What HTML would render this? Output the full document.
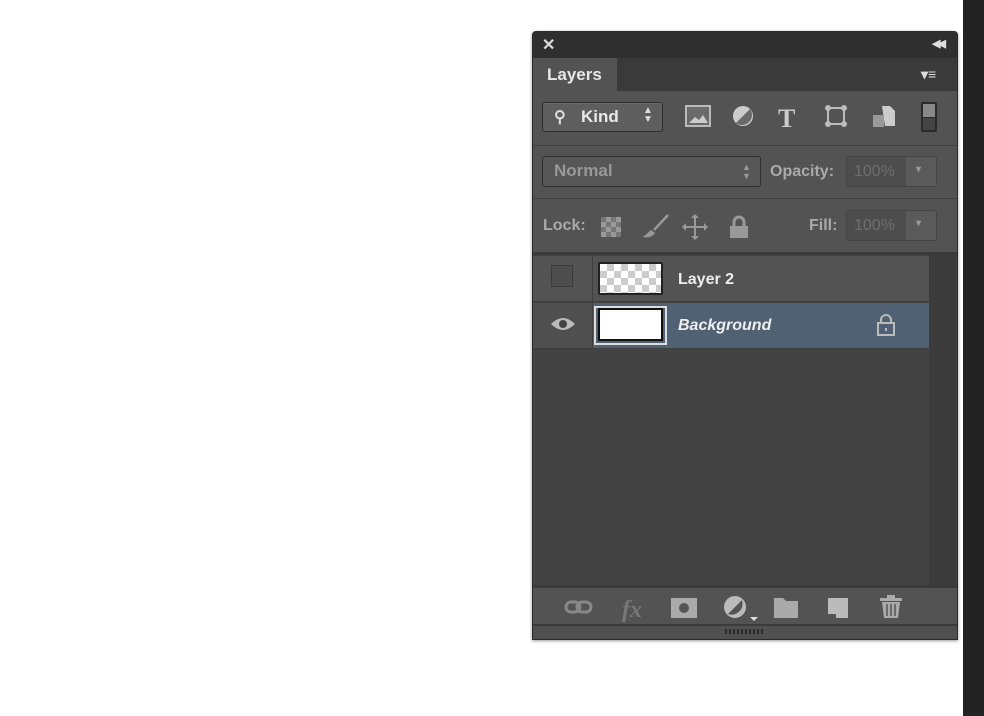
<!DOCTYPE html>
<html><head><meta charset="utf-8"><style>
*{margin:0;padding:0;box-sizing:border-box}
body{width:984px;height:716px;background:#fff;position:relative;overflow:hidden;font-family:"Liberation Sans",sans-serif;font-weight:bold}
.a{position:absolute}
.box{position:absolute;border:1px solid #2e2e2e;border-radius:3px}
.t{position:absolute;color:#c8c8c8;font-size:16px}
.dim{color:#8a8a8a}
</style></head><body>
<div class="a" style="left:963px;top:0;width:21px;height:716px;background:#232323"></div>
<div class="a" style="left:532px;top:31px;width:426px;height:609px;background:#535353;border:1px solid #2a2a2a;border-radius:4px 4px 0 0;box-shadow:0 1px 3px rgba(0,0,0,.4)"></div>
<div class="a" style="left:533px;top:32px;width:424px;height:26px;background:#2f2f2f;border-radius:3px 3px 0 0"></div>
<div class="t" style="left:542px;top:35px;color:#ddd;font-size:16px">✕</div>
<div class="t" style="left:932px;top:37px;color:#ddd;font-size:11px;letter-spacing:-3px">◀◀</div>
<div class="a" style="left:533px;top:58px;width:424px;height:33px;background:#3a3a3a"></div>
<div class="a" style="left:533px;top:58px;width:84px;height:34px;background:#535353"></div>
<div class="t" style="left:547px;top:65px;color:#e8e8e8;font-size:17px">Layers</div>
<div class="t" style="left:921px;top:66px;color:#ddd;font-size:14px">▾≡</div>
<div class="box" style="left:542px;top:102px;width:121px;height:30px;background:#5e5e5e;box-shadow:inset 0 1px 0 #6a6a6a"></div>
<div class="t" style="left:554px;top:107px;color:#ddd">⚲</div>
<div class="t" style="left:581px;top:107px;color:#e8e8e8;font-size:17px">Kind</div>
<div class="t" style="left:643px;top:106px;color:#ddd;font-size:10px;line-height:9px">▲<br>▼</div>
<svg class="a" style="left:680px;top:100px" width="270" height="36">
<rect x="6" y="6" width="24" height="20" fill="#6a6a6a" stroke="#bbb" stroke-width="2"/><path d="M9 23l6-6 4 3 4-5 5 8z" fill="#ccc"/>
<circle cx="63" cy="16" r="10" fill="#ccc"/><path d="M56 23L70 9A10 10 0 0 1 56 23z" fill="#6a6a6a"/>
<text x="98" y="27" font-family="Liberation Serif" font-size="26" fill="#ccc">T</text>
<rect x="148" y="8" width="16" height="16" fill="none" stroke="#bbb" stroke-width="2"/><g fill="#bbb"><circle cx="148" cy="8" r="3"/><circle cx="164" cy="8" r="3"/><circle cx="148" cy="24" r="3"/><circle cx="164" cy="24" r="3"/></g>
<path d="M202 6h8l5 5v15h-10z" fill="#ccc"/><rect x="193" y="15" width="11" height="12" fill="#999"/>
<rect x="241" y="2" width="16" height="30" fill="#2a2a2a" rx="2"/><rect x="243" y="4" width="12" height="13" fill="#888"/><rect x="243" y="18" width="12" height="12" fill="#444"/>
</svg>
<div class="a" style="left:533px;top:145px;width:424px;height:1px;background:#404040"></div>
<div class="box" style="left:542px;top:156px;width:219px;height:31px;background:#575757"></div>
<div class="t dim" style="left:554px;top:161px;font-size:17px;color:#999">Normal</div>
<div class="t" style="left:742px;top:163px;color:#999;font-size:9px;line-height:9px">▲<br>▼</div>
<div class="t" style="left:770px;top:163px;color:#aaa">Opacity:</div>
<div class="box" style="left:846px;top:156px;width:91px;height:31px;background:#4d4d4d;border-color:#444"></div>
<div class="a" style="left:906px;top:157px;width:30px;height:29px;background:#5a5a5a"></div>
<div class="t" style="left:854px;top:163px;color:#6e6e6e;font-weight:normal">100%</div>
<div class="t" style="left:916px;top:164px;color:#999;font-size:10px">▾</div>
<div class="a" style="left:533px;top:198px;width:424px;height:1px;background:#404040"></div>
<div class="t" style="left:543px;top:217px;color:#aaa">Lock:</div>
<svg class="a" style="left:598px;top:210px" width="160" height="34">
<g fill="#999"><rect x="3" y="7" width="20" height="20"/></g><g fill="#777"><rect x="3" y="7" width="5" height="5"/><rect x="13" y="7" width="5" height="5"/><rect x="8" y="12" width="5" height="5"/><rect x="18" y="12" width="5" height="5"/><rect x="3" y="17" width="5" height="5"/><rect x="13" y="17" width="5" height="5"/><rect x="8" y="22" width="5" height="5"/><rect x="18" y="22" width="5" height="5"/></g>
<path d="M70 5L56 20" stroke="#999" stroke-width="2.5"/><path d="M44 27c4-1 6-5 9-7l4 3c-3 4-7 5-13 4z" fill="#999"/>
<path d="M97 6v22M86 17h22" stroke="#999" stroke-width="2"/><path d="M97 4l-4 4h8zM97 30l-4-4h8zM84 17l4-4v8zM110 17l-4-4v8z" fill="#999"/>
<path d="M136 16v-4a5 5 0 0 1 10 0v4" stroke="#999" stroke-width="3" fill="none"/><rect x="132" y="16" width="18" height="12" fill="#999"/>
</svg>
<div class="t" style="left:809px;top:217px;color:#aaa">Fill:</div>
<div class="box" style="left:846px;top:210px;width:91px;height:31px;background:#4d4d4d;border-color:#444"></div>
<div class="a" style="left:906px;top:211px;width:30px;height:29px;background:#5a5a5a"></div>
<div class="t" style="left:854px;top:217px;color:#6e6e6e;font-weight:normal">100%</div>
<div class="t" style="left:916px;top:218px;color:#999;font-size:10px">▾</div>
<div class="a" style="left:533px;top:252px;width:424px;height:3px;background:#3a3a3a"></div>
<div class="a" style="left:533px;top:255px;width:424px;height:330px;background:#434343"></div>
<div class="a" style="left:929px;top:255px;width:27px;height:330px;background:#3b3b3b"></div>
<div class="a" style="left:533px;top:256px;width:396px;height:46px;background:#535353;border-bottom:1px solid #3e3e3e"></div>
<div class="a" style="left:533px;top:303px;width:396px;height:46px;background:#4f4f4f;border-bottom:1px solid #3e3e3e"></div>
<div class="a" style="left:593px;top:303px;width:336px;height:45px;background:#4f6172"></div>
<div class="a" style="left:592px;top:256px;width:1px;height:92px;background:#3e3e3e"></div>
<div class="a" style="left:551px;top:265px;width:22px;height:22px;border:1px solid #3a3a3a;background:#4e4e4e"></div>
<div class="a" style="left:598px;top:262px;width:65px;height:33px;border:2px solid #222;border-radius:2px;background-color:#fff;background-image:linear-gradient(45deg,#ccc 25%,transparent 25%,transparent 75%,#ccc 75%),linear-gradient(45deg,#ccc 25%,transparent 25%,transparent 75%,#ccc 75%);background-size:14px 14px;background-position:0 0,7px 7px"></div>
<div class="t" style="left:678px;top:271px;color:#eee">Layer 2</div>
<svg class="a" style="left:549px;top:314px" width="28" height="20"><path d="M2 10Q14-2 26 10Q14 22 2 10z" fill="#bbb"/><circle cx="14" cy="10" r="4" fill="#444"/></svg>
<div class="a" style="left:594px;top:306px;width:73px;height:39px;border:2px solid #ddd"></div>
<div class="a" style="left:598px;top:308px;width:65px;height:33px;border:2px solid #111;background:#fff"></div>
<div class="t" style="left:678px;top:317px;color:#eee;font-style:italic">Background</div>
<svg class="a" style="left:876px;top:313px" width="20" height="24"><path d="M5 10v-3a5 5 0 0 1 10 0v3" stroke="#bbb" stroke-width="2" fill="none"/><rect x="2" y="10" width="16" height="12" fill="none" stroke="#bbb" stroke-width="2"/><rect x="9" y="15" width="2" height="3" fill="#bbb"/></svg>
<div class="a" style="left:533px;top:585px;width:424px;height:3px;background:#3a3a3a"></div>
<svg class="a" style="left:560px;top:590px" width="400" height="36">
<rect x="6" y="12" width="14" height="10" rx="5" fill="none" stroke="#888" stroke-width="3"/><rect x="17" y="12" width="14" height="10" rx="5" fill="none" stroke="#888" stroke-width="3"/>
<text x="62" y="27" font-family="Liberation Serif" font-style="italic" font-size="24" fill="#777">fx</text>
<rect x="111" y="8" width="26" height="20" fill="#aaa"/><circle cx="124" cy="18" r="5" fill="#555"/>
<circle cx="175" cy="17" r="11" fill="#bbb"/><path d="M168 24L182 10A11 11 0 0 1 168 24z" fill="#555"/><path d="M190 27l4 4 4-4z" fill="#ddd"/>
<path d="M214 8h9l3 3h12v17h-24z" fill="#aaa"/>
<path d="M268 8h20v20h-12v-4h-8z" fill="#bbb"/>
<rect x="320" y="8" width="22" height="3" fill="#aaa"/><rect x="327" y="5" width="8" height="3" fill="#aaa"/><path d="M322 12h18l-2 16h-14z" fill="#aaa"/><path d="M327 14v12M331 14v12M335 14v12" stroke="#555" stroke-width="1.5"/>
</svg>
<div class="a" style="left:533px;top:624px;width:424px;height:2px;background:#3a3a3a"></div>
<div class="a" style="left:533px;top:626px;width:424px;height:13px;background:#505050"></div>
<div class="a" style="left:725px;top:629px;width:39px;height:5px;background:repeating-linear-gradient(90deg,#2a2a2a 0 2px,transparent 2px 4px)"></div>
</body></html>
